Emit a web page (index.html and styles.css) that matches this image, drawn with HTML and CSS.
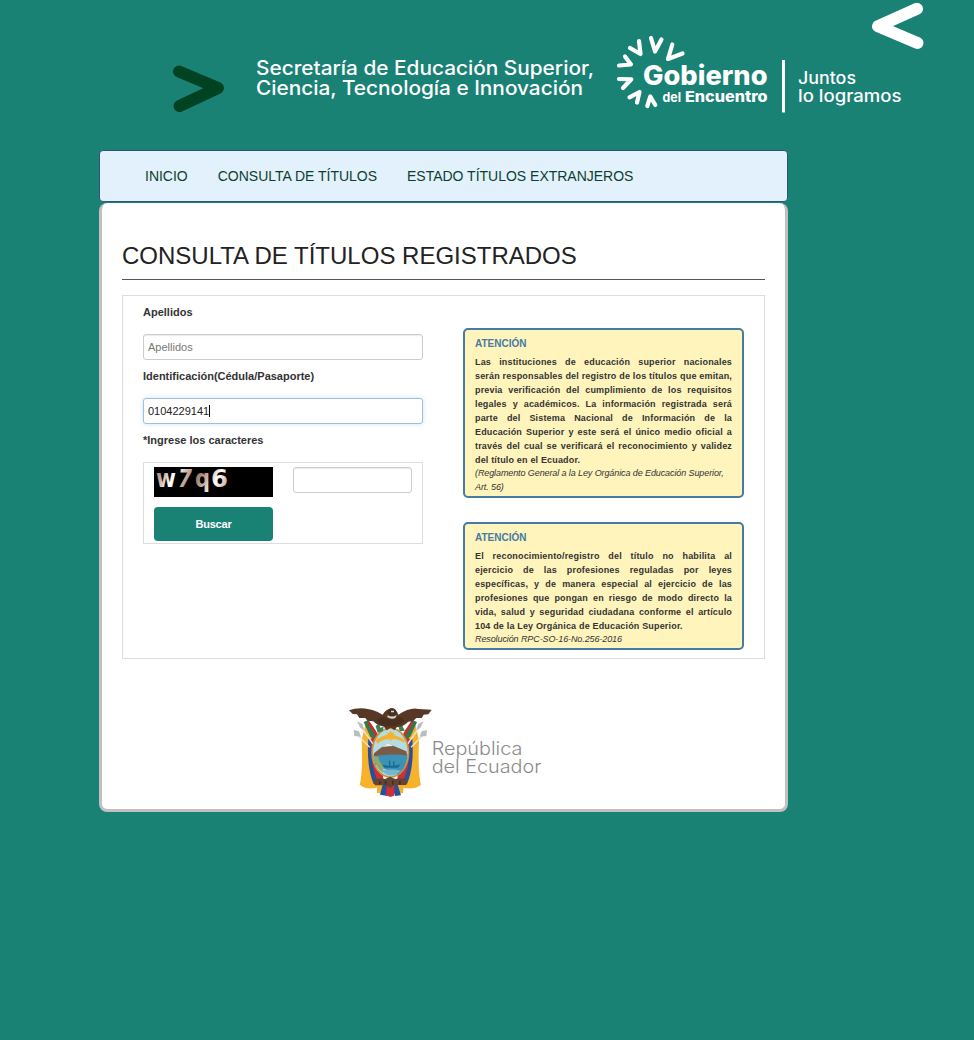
FILE: index.html
```html
<!DOCTYPE html>
<html lang="es">
<head>
<meta charset="utf-8">
<title>Consulta de Títulos</title>
<link rel="stylesheet" href="styles.css">
</head>
<body>
<header class="banner">
<svg class="banner-art" viewBox="0 0 974 150" width="974" height="150">
  <polyline class="arrow-dark" points="179,71.5 218,88 179.5,106"/>
  <polyline class="arrow-light" points="917,8.8 878,26.3 917.5,43"/>
  <g class="org">
    <text x="256" y="74.7" textLength="338" lengthAdjust="spacingAndGlyphs">Secretaría de Educación Superior,</text>
    <text x="256" y="94.9" textLength="327" lengthAdjust="spacingAndGlyphs">Ciencia, Tecnología e Innovación</text>
  </g>
  <g class="rays">
    <polyline points="619,65.5 631,64.5 625,56.5"/>
    <polyline points="630,48 640.5,54 639,41"/>
    <polyline points="651,38 655,51.5 661.5,39.5"/>
    <polyline points="672.3,44.5 668,59 682.5,53.5"/>
    <polyline points="619,79 631.3,79.3 623,88"/>
    <polyline points="629.5,97.3 639.5,92 637,102.5"/>
    <polyline points="647.3,106 650.3,96.5 655.3,105"/>
  </g>
  <g class="brand">
    <text class="brand-main" x="643" y="85" textLength="124.5" lengthAdjust="spacingAndGlyphs">Gobierno</text>
    <text class="brand-del" x="662.5" y="102" textLength="18.5" lengthAdjust="spacingAndGlyphs">del</text>
    <text class="brand-sub" x="685" y="102" textLength="82.5" lengthAdjust="spacingAndGlyphs">Encuentro</text>
  </g>
  <rect class="rule" x="782" y="60" width="3" height="52.5"/>
  <g class="slogan">
    <text x="798" y="83.7" textLength="58" lengthAdjust="spacingAndGlyphs">Juntos</text>
    <text x="798" y="102" textLength="103.5" lengthAdjust="spacingAndGlyphs">lo logramos</text>
  </g>
</svg>
</header>
<div class="page">
  <nav class="menu">
    <a>INICIO</a><a>CONSULTA DE TÍTULOS</a><a>ESTADO TÍTULOS EXTRANJEROS</a>
  </nav>
  <main class="card">
    <h1 class="title">CONSULTA DE TÍTULOS REGISTRADOS</h1>
    <div class="panel">
      <form class="form">
        <label class="label">Apellidos</label>
        <div class="input placeholder">Apellidos</div>
        <label class="label">Identificación(Cédula/Pasaporte)</label>
        <div class="input focused">0104229141<span class="caret"></span></div>
        <label class="label">*Ingrese los caracteres</label>
        <div class="captcha">
          <svg class="captcha-image" viewBox="0 0 119 30" width="119" height="30">
            <defs><linearGradient id="tone" gradientUnits="userSpaceOnUse" x1="2" y1="0" x2="20" y2="9" spreadMethod="reflect">
              <stop offset="0" stop-color="#9c7562"/><stop offset=".5" stop-color="#cdb0a2"/><stop offset="1" stop-color="#fff"/>
            </linearGradient></defs>
            <rect width="119" height="30"/>
            <g class="code">
              <text x="2" y="20" textLength="20" lengthAdjust="spacingAndGlyphs">w</text>
              <text class="slanted" x="24" y="20" textLength="14" lengthAdjust="spacingAndGlyphs">7</text>
              <text x="41" y="20" textLength="15" lengthAdjust="spacingAndGlyphs">q</text>
              <text x="57" y="20" textLength="17" lengthAdjust="spacingAndGlyphs">6</text>
            </g>
          </svg>
          <div class="input"></div>
          <button class="submit" type="button">Buscar</button>
        </div>
      </form>
      <aside class="notices">
        <section class="notice">
          <h2>ATENCIÓN</h2>
          <p class="body"><span>Las instituciones de educación superior nacionales</span>
          <span>serán responsables del registro de los títulos que emitan,</span>
          <span>previa verificación del cumplimiento de los requisitos</span>
          <span>legales y académicos. La información registrada será</span>
          <span>parte del Sistema Nacional de Información de la</span>
          <span>Educación Superior y este será el único medio oficial a</span>
          <span>través del cual se verificará el reconocimiento y validez</span>
          <span class="last">del título en el Ecuador.</span></p>
          <p class="source">(Reglamento General a la Ley Orgánica de Educación Superior,<br>Art. 56)</p>
        </section>
        <section class="notice">
          <h2>ATENCIÓN</h2>
          <p class="body"><span>El reconocimiento/registro del título no habilita al</span>
          <span>ejercicio de las profesiones reguladas por leyes</span>
          <span>específicas, y de manera especial al ejercicio de las</span>
          <span>profesiones que pongan en riesgo de modo directo la</span>
          <span>vida, salud y seguridad ciudadana conforme el artículo</span>
          <span class="last">104 de la Ley Orgánica de Educación Superior.</span></p>
          <p class="source">Resolución RPC-SO-16-No.256-2016</p>
        </section>
      </aside>
    </div>
    <footer class="footer">
      <svg viewBox="0 0 600 300" width="200" height="100">
        <defs>
          <!-- one side of flags, mirrored for the other -->
          <g id="flags">
            <path fill="#f6b22b" d="M62 70 L88 100 L100 262 Q68 272 44 254 Q54 220 50 120Z"/>
            <path fill="#27509b" d="M70 116 L92 120 L106 250 L86 252 Q64 200 70 116Z"/>
            <path fill="#d22f35" d="M80 110 L100 100 L116 246 L100 246 Q72 190 80 110Z"/>
            <path fill="#2d7a50" d="M56 66 L70 60 L92 92 L90 116 L76 110Z"/>
            <path fill="#c22f35" d="M66 66 L73 64 L97 100 L92 110Z"/>
            <path stroke="#e8e4dc" stroke-width="4" d="M42 72 L84 132M32 100 L74 142"/>
            <path fill="#b9bdbd" d="M36 64 L52 72 L58 90 L46 84Z M26 90 L42 94 L48 110 L28 108Z"/>
          </g>
        </defs>
        <use href="#flags"/>
        <use href="#flags" transform="translate(272 0) scale(-1 1)"/>
        <!-- shield -->
        <ellipse cx="136" cy="158" rx="57" ry="76" fill="#c99639"/>
        <ellipse cx="136" cy="158" rx="52" ry="71" fill="#b6dce3"/>
        <path fill="#eeb239" d="M91 121 Q134 87 181 121 L176 128 Q136 102 98 131Z"/>
        <circle cx="137" cy="108" r="11" fill="#f7b42b"/>
        <path stroke="#f7b42b" stroke-width="3" d="M137 92V124M121 108H153M126 97L148 119M148 97L126 119"/>
        <path fill="#795b46" d="M87 160 L108 143 L129 130 L146 138 L184 154 L187 168 H86Z"/>
        <path fill="#eee" d="M112 141 L129 129 L145 138 L131 139Z"/>
        <path fill="#3d91b5" d="M85 168 Q134 160 187 166 Q185 205 158 224 L91 194Z"/>
        <path fill="#8fa96f" d="M85 168 L102 171 Q98 184 117 198 L112 218 Q90 200 85 168Z"/>
        <path fill="#176a91" d="M110 194 Q145 201 167 193 L158 203 H119Z M132 182 h4 v14 h-4Z M144 184 h4 v12 h-4Z"/>
        <path fill="#75b9d0" d="M108 211 Q144 205 168 212 Q139 242 108 211Z"/>
        <!-- ribbons -->
        <path fill="#f4b12c" d="M96 249 L128 249 L121 280 L96 279Z M148 250 L177 252 L174 279 L151 281Z"/>
        <path fill="#27509b" d="M113 254 L132 254 L128 288 L105 284Z M140 254 L158 254 L168 286 L150 288Z"/>
        <path fill="#d12e38" d="M125 252 H149 L147 287 L136 291 L123 285Z"/>
        <path fill="#654433" d="M84 240 Q103 232 120 237 L135 230 L151 237 Q168 231 187 239 L184 255 H148 L136 264 L121 256 H90Z"/>
        <path fill="#452d20" d="M102 244 h5v9h-5z M119 242h5v12h-5z M141 242h5v12h-5z M162 243h5v11h-5z"/>
        <path fill="#3c8053" d="M92 78 L103 70 L106 83 L116 80 L113 94 L98 98Z M161 81 L171 74 L175 84 L180 92 L164 94Z"/>
        <!-- condor -->
        <path fill="#573725" d="M12 31 Q52 17 98 36 L113 44 Q123 27 139 25 Q154 26 160 44 Q195 21 221 27 L260 29 L250 43 L236 44 L230 54 L214 54 L204 64 L190 65 Q175 80 155 82 L149 91 L137 83 L125 91 L117 80 Q94 76 85 64 L67 62 L61 54 L43 54 L36 43 L23 42Z"/>
        <path fill="#4a2e1e" d="M95 61 L112 48 Q142 70 164 48 L179 63 Q142 89 105 72Z"/>
        <circle cx="141" cy="37" r="12" fill="#453022"/>
        <path fill="#ddd3c7" d="M128 46 Q142 54 155 45 L151 54 Q139 60 127 51Z M138 32h9v5h-9z"/>
        <g class="country">
          <text x="260" y="164" textLength="272" lengthAdjust="spacingAndGlyphs">República</text>
          <text x="260" y="220" textLength="329" lengthAdjust="spacingAndGlyphs">del Ecuador</text>
        </g>
      </svg>
    </footer>
  </main>
</div>
</body>
</html>
```
FILE: styles.css
```css
* { box-sizing: border-box; }
body { margin: 0; min-height: 1040px; background: #1a8175; font-family: "Liberation Sans", Arial, sans-serif; color: #333; }
.banner { height: 150px; }
.banner-art { display: block; }
.banner-art text { font-family: Inter, sans-serif; fill: #fff; }
.banner-art polyline { fill: none; stroke-linecap: round; stroke-linejoin: round; }
.arrow-dark { stroke: #004323; stroke-width: 12; }
.arrow-light { stroke: #fff; stroke-width: 12; }
.org { font-size: 20px; font-weight: 500; }
.rays { stroke: #fff; stroke-width: 4.2; }
.rule { fill: #fff; }
.brand-main { font-size: 27.5px; font-weight: 800; }
.brand-del { font-size: 13px; font-weight: 700; }
.brand-sub { font-size: 15px; font-weight: 800; }
.slogan { font-size: 17px; font-weight: 500; }
.page { width: 689px; margin-left: 99px; }
.menu { height: 52px; border: 1px solid #2f5379; border-radius: 4px; background: #e3f1fc; display: flex; align-items: center; padding-left: 45px; gap: 30px; font-size: 14px; letter-spacing: -.01px; color: #0c3f2d; }
.card { height: 609px; margin-top: 1px; padding: 37px 20px 0; background: #fff; border: 3px solid #c0c0c0; border-top: 0; border-radius: 8px; }
.title { margin: 0; height: 40px; line-height: 32px; font-size: 24px; font-weight: 400; color: #222; border-bottom: 1px solid #555; }
.panel { height: 364px; margin-top: 15px; border: 1px solid #ddd; display: grid; grid-template-columns: 280px 281px; column-gap: 40px; padding-left: 20px; }
.form { padding-top: 6px; font-size: 11px; }
.label { display: block; height: 32px; line-height: 21px; font-weight: 700; }
.input { height: 26px; margin-bottom: 6px; padding: 0 4px; border: 1px solid #ccc; border-radius: 3px; line-height: 25px; box-shadow: inset 0 1px 1px rgba(0, 0, 0, .08); background: #fff; }
.placeholder { color: #777; }
.focused { border-color: #9cc0de; box-shadow: 0 0 4px rgba(102, 175, 233, .35); color: #222; }
.caret { display: inline-block; width: 1px; height: 12px; background: #000; vertical-align: -2px; }
.captcha { height: 82px; border: 1px solid #ddd; padding: 4px 10px; display: grid; grid-template-columns: 119px 119px; grid-template-rows: 30px 34px; gap: 10px 20px; }
.captcha .input { margin: 0; }
.captcha-image { display: block; }
.code { font: 700 25px "DejaVu Sans", sans-serif; fill: url(#tone); }
.slanted { font-style: italic; }
.submit { border: 0; border-radius: 4px; background: #1a8175; color: #fff; font: 700 11px/32px "Liberation Sans", Arial, sans-serif; letter-spacing: -.2px; padding: 0 0 1px; }
.notices { padding-top: 32px; display: flex; flex-direction: column; gap: 24px; }
.notice { border: 2px solid #457ba5; border-radius: 5px; background: #fff4bc; padding: 6px 10px 1px; }
.notice + .notice { padding-bottom: 0; height: 128px; }
.notice h2 { margin: 0; height: 19px; line-height: 15px; font-size: 10px; color: #457ba5; }
.notice p { margin: 0; }
.body { line-height: 14px; font-size: 9px; font-weight: 700; letter-spacing: .17px; }
.body span { display: block; white-space: nowrap; text-align-last: justify; }
.body .last { text-align-last: left; }
.source { line-height: 14px; font-size: 9px; letter-spacing: -.1px; font-style: italic; white-space: nowrap; position: relative; top: -1px; }
.footer { padding: 41px 0 0 223px; }
.footer svg { display: block; }
.country { font: 300 55px Inter, sans-serif; fill: #8b8b8b; }
```
